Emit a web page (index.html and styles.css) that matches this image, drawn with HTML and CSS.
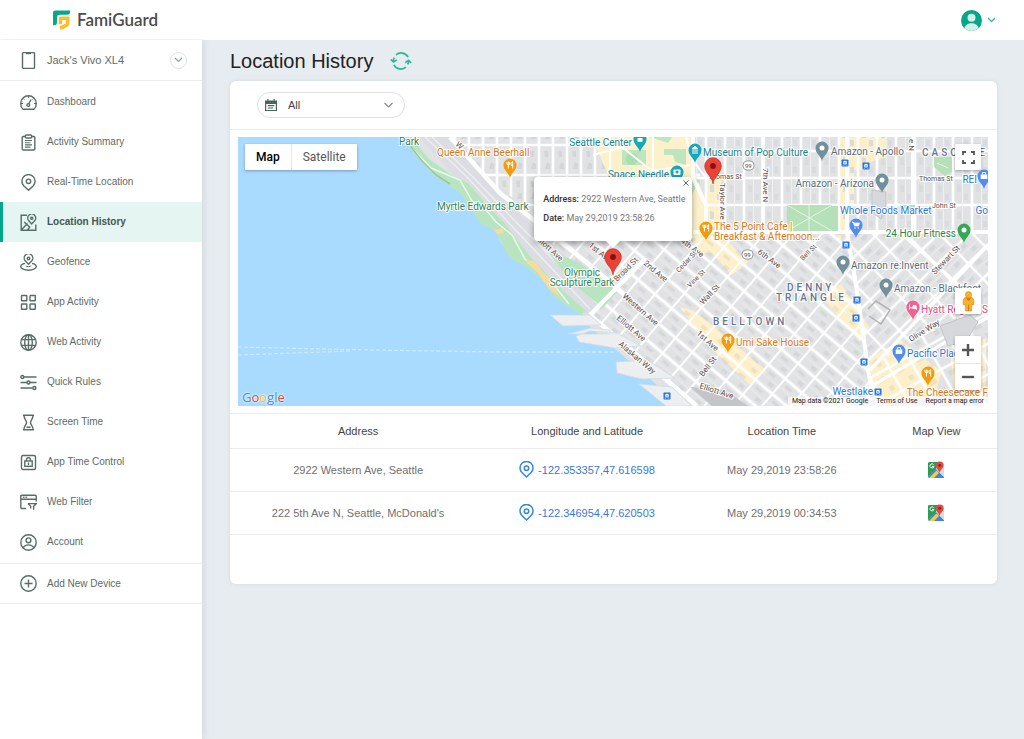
FILE: index.html
```html
<!DOCTYPE html>
<html lang="en">
<head>
<meta charset="utf-8">
<meta name="viewport" content="width=device-width, initial-scale=1">
<title>FamiGuard - Location History</title>
<link rel="stylesheet" href="styles.css">
</head>
<body>
<header class="topbar">
  <a class="brand" href="#">
    <svg class="brand-mark" viewBox="0 0 17 20" aria-hidden="true">
      <path fill="#04a788" d="M0 3Q0 .6 2.600.6H17V2Q17 4.700 14.300 4.700H6.500Q4 4.700 4 7V12.200Q4 15.200 1.200 15.200H0Z"/>
      <path fill="#fdbd2c" d="M8 6.500H16.600V13.200Q16.600 15.300 14.600 16.500L9.500 19.600Q6.800 20 6.600 17.200V16.200L12.800 13.600V10H9.200V13.200Q9.200 14.300 7.600 14.300H5.700V8.800Q5.700 6.500 8 6.500Z"/>
    </svg>
    <span>FamiGuard</span>
  </a>
  <button class="profile" type="button" aria-label="Profile menu">
    <svg class="avatar" viewBox="0 0 21 21" aria-hidden="true"><circle cx="10.500" cy="10.500" r="10.500" fill="#04a788"/><circle cx="10.500" cy="7.700" r="4" fill="#d2efe8"/><path fill="#d2efe8" d="M3.500 18.300C4 14.800 7 13.300 10.500 13.300S17 14.800 17.500 18.300A10.500 10.500 0 0 1 3.500 18.300Z"/></svg>
    <svg class="chev" viewBox="0 0 9 6" aria-hidden="true"><path d="M1 1L4.500 4.500L8 1" fill="none" stroke="#3fb49c" stroke-width="1.300"/></svg>
  </button>
</header>

<div class="shell">
<aside class="sidebar">
  <div class="device">
    <svg class="icon" viewBox="0 0 17 17"><rect x="2.500" y=".6" width="12" height="15.800" rx="1"/><path d="M6 1.200H11" stroke-width="2"/></svg>
    <span>Jack's Vivo XL4</span>
    <button class="device-toggle" type="button" aria-label="Choose device"><svg class="chev" viewBox="0 0 9 6"><path d="M1 1L4.500 4.500L8 1" fill="none" stroke="#8f9d99" stroke-width="1.100"/></svg></button>
  </div>
  <nav class="menu">
    <a href="#"><svg class="icon" viewBox="0 0 17 17"><path d="M3 15.300C.9 13.500.7 11 .7 9.500A7.800 7.800 0 0 1 16.300 9.500C16.300 11 16.100 13.500 14 15.300Z"/><path d="M8.500 2V4M3.200 4.400L4.400 5.600M13.800 4.400L12.600 5.600M1 9.500H3M14 9.500H16" stroke-width="1"/><path d="M11 5.500L8.700 10"/><circle cx="8.300" cy="11" r="1.400"/></svg>Dashboard</a>
    <a href="#"><svg class="icon" viewBox="0 0 17 17"><path d="M5 2.500H3Q2.200 2.500 2.200 3.300V15Q2.200 16 3.200 16H13.800Q14.800 16 14.800 15V3.300Q14.800 2.500 14 2.500H12"/><rect x="5.300" y="1" width="6.400" height="3" rx="1"/><path d="M5 6.500H12M5 8.700H10.500M5 10.900H12M5 13.100H10.500" stroke-width="1.100"/></svg>Activity Summary</a>
    <a href="#"><svg class="icon" viewBox="0 0 17 17"><path d="M8.500 16.300L3.700 11.700A6.600 6.600 0 1 1 13.300 11.700Z"/><circle cx="8.500" cy="7.300" r="2.200"/></svg>Real-Time Location</a>
    <a href="#" class="active" aria-current="page"><svg class="icon" viewBox="0 0 17 17"><path d="M7 1.300H1.200V16.200H15.800V10.500M1.200 16L7.500 9.500M4.200 8L9.700 13L7.600 16"/><path d="M11.700 10L8.800 6.800A4 4 0 1 1 14.600 6.800Z"/><circle cx="11.700" cy="4.300" r="1.100"/></svg>Location History</a>
    <a href="#"><svg class="icon" viewBox="0 0 17 17"><path d="M8.500 10.200L5.400 7.100A4.300 4.300 0 1 1 11.600 7.100Z"/><circle cx="8.500" cy="4.500" r="1.300"/><path d="M5 9.400C2.500 9.900.7 11 .7 12.500C.7 14.700 4.500 16.200 8.500 16.200S16.300 14.700 16.300 12.500C16.300 11 14.500 9.900 12 9.400"/><path d="M5.800 11.600C6.300 13.100 10.700 13.100 11.200 11.600" stroke-width="1"/></svg>Geofence</a>
    <a href="#"><svg class="icon" viewBox="0 0 17 17"><rect x="1.500" y="1.500" width="5.300" height="5.300" rx=".5"/><rect x="10" y="1.500" width="5.300" height="5.300" rx=".5"/><rect x="1.500" y="10" width="5.300" height="5.300" rx=".5"/><rect x="10" y="10" width="5.300" height="5.300" rx=".5"/></svg>App Activity</a>
    <a href="#"><svg class="icon" viewBox="0 0 17 17"><circle cx="8.500" cy="8.500" r="7.700"/><ellipse cx="8.500" cy="8.500" rx="3.800" ry="7.700"/><path d="M8.500 .8V16.200M2 5.600H15M2 11.400H15"/></svg>Web Activity</a>
    <a href="#"><svg class="icon" viewBox="0 0 17 17"><path d="M4 3H16.500M.5 8.500H7M10 8.500H16.500M.5 14H12.700"/><circle cx="2.300" cy="3" r="1.500"/><circle cx="8.500" cy="8.500" r="1.500"/><circle cx="14.400" cy="14" r="1.500"/></svg>Quick Rules</a>
    <a href="#"><svg class="icon" viewBox="0 0 17 17"><path d="M3 1.300H14M3 15.700H14" stroke-width="1.500"/><path d="M4 1.500C4 5 6.500 6.200 6.500 8.500S4 12 4 15.500M13 1.500C13 5 10.500 6.200 10.500 8.500S13 12 13 15.500M6.500 13.300H10.500"/></svg>Screen Time</a>
    <a href="#"><svg class="icon" viewBox="0 0 17 17"><rect x="1.500" y="1.500" width="14" height="14" rx="1.500"/><rect x="4.800" y="7" width="7.400" height="5.300"/><path d="M6.500 7V5.800A2 2 0 0 1 10.500 5.800V7M8.500 8.500V11"/></svg>App Time Control</a>
    <a href="#"><svg class="icon" viewBox="0 0 17 17"><path d="M6 14.500H2Q.8 14.500.8 13.300V2.200Q.8 1.200 1.800 1.200H15.200Q16.200 1.200 16.200 2.200V7.500M.8 5.300H16.200"/><path d="M2.800 3.200H7.500" stroke-dasharray="1 .7"/><path d="M8 9.600H16.300L13.600 12.300V15.800M8 9.600L10.700 12.300V14.600"/></svg>Web Filter</a>
    <a href="#"><svg class="icon" viewBox="0 0 17 17"><circle cx="8.500" cy="8.500" r="7.700"/><circle cx="8.500" cy="6.300" r="2.400"/><path d="M3.200 14C4 11.800 6 10.900 8.500 10.900S13 11.800 13.800 14"/></svg>Account</a>
  </nav>
  <a class="add-device" href="#"><svg class="icon" viewBox="0 0 17 17"><circle cx="8.500" cy="8.500" r="7.700"/><path d="M8.500 4.500V12.500M4.500 8.500H12.500"/></svg>Add New Device</a>
</aside>

<main class="content">
  <div class="heading">
    <h1>Location History</h1>
    <button type="button" class="refresh" aria-label="Refresh"><svg viewBox="0 0 22 18" fill="none" stroke="#2bb898" stroke-width="1.700"><path d="M6 2.800C9.500 -.2 15.500 .4 18.200 5.200M3.600 9.800C3.300 8.200 3.500 7 4.200 5.500M16 15.200C12.500 18.200 6.500 17.600 3.800 12.800M18.400 8.500C18.700 9.800 18.500 11 17.800 12.500"/><path d="M.8 7.400L3.600 10L6.800 7.900M15.200 10.600L18.400 8.300L21.300 10.900"/></svg></button>
  </div>

  <section class="card">
    <div class="toolbar">
      <label class="range">
        <svg class="range-cal" viewBox="0 0 12 12"><path fill="#49665d" d="M0 1.500H2.300V0H3.500V1.500H8.500V0H9.700V1.500H12V12H0ZM1.200 5V10.900H10.800V5Z" fill-rule="evenodd"/><path d="M2.800 6.600H9.300M2.800 9H8" stroke="#49665d" stroke-width="1.100"/></svg>
        <select aria-label="Date range"><option>All</option></select>
        <svg class="chev range-chev" viewBox="0 0 9 6"><path d="M.5 1L4.500 5L8.500 1" fill="none" stroke="#888" stroke-width="1.200"/></svg>
      </label>
    </div>

    <div class="map-wrap"><div class="map">
      <svg class="map-canvas" viewBox="238 137 750 269" preserveAspectRatio="xMidYMid slice" role="img" aria-label="Map of Seattle">
        <defs>
          <pattern id="north" width="14" height="30" patternUnits="userSpaceOnUse" x="497" y="175"><path d="M5 6h4v6h-3zM8 17l3 2v5h-5z" fill="#d3d5d8"/><path d="M0 0H14M0 30H14M0 0V30M14 0V30" stroke="#fff" stroke-width="2.600"/></pattern>
          <pattern id="east" width="19" height="27" patternUnits="userSpaceOnUse" x="706" y="178"><path d="M4 6l4 1v7H4zM11 16h4v6h-4z" fill="#dadbde"/><path d="M0 0H19M0 27H19M0 0V27M19 0V27" stroke="#fff" stroke-width="2.600"/><path d="M9.500 0V27" stroke="#f1f2f3" stroke-width=".8"/></pattern>
          <pattern id="belltown" width="22" height="20" patternUnits="userSpaceOnUse" patternTransform="translate(590 315) rotate(40.400) translate(-8 2)"><path d="M5 4h8v3H5zM12 12h6v4h-6z" fill="#9a9ca5" fill-opacity=".15"/><path d="M0 0H22M0 20H22" stroke="#fff" stroke-width="3.200"/><path d="M0 0V20M22 0V20" stroke="#fff" stroke-width="2"/><path d="M0 10H22" stroke="#fff" stroke-opacity=".5" stroke-width=".7"/></pattern>
          <pattern id="triangle" width="24" height="21" patternUnits="userSpaceOnUse" patternTransform="translate(870 300) rotate(-44)"><path d="M5 4h7v4H5zM12 12h6v4h-6z" fill="#9a9ca5" fill-opacity=".15"/><path d="M0 0H24M0 21H24M0 0V21M24 0V21" stroke="#fff" stroke-width="2.400"/><path d="M0 10.500H24" stroke="#fff" stroke-opacity=".5" stroke-width=".7"/></pattern>
          <pattern id="olive" width="22" height="27" patternUnits="userSpaceOnUse" patternTransform="translate(870 378) rotate(-29)"><path d="M5 5h8v5H5zM12 17h5v5h-5z" fill="#9a9ca5" fill-opacity=".15"/><path d="M0 0H22M0 27H22M0 0V27M22 0V27" stroke="#fff" stroke-width="2.600"/></pattern>
          <g id="drop"><path d="M0 13C-1 8-6.500 5.500-6.500 0A6.500 6.500 0 0 1 6.500 0C6.500 5.500 1 8 0 13Z"/></g>
          <g id="fork"><use href="#drop" fill="#f49b0b"/><path d="M-3-3.300V-.7H-.2V-3.300M-1.600-3.300V3.500M2.700 3.500V-3.500C1-2.500 1-.5 1.200.3H2.700" fill="none" stroke="#fff" stroke-width="1"/></g>
          <g id="spot"><use href="#drop" fill="#71909c"/><circle r="2.500" fill="#fff"/></g>
          <g id="bag"><use href="#drop" fill="#4f8df5"/><path d="M-3.300-1.500H3.300V3H-3.300Z" fill="#fff"/><path d="M-1.600-1.500V-3.300H1.600V-1.500" fill="none" stroke="#fff"/></g>
          <g id="station"><rect x="-3.500" y="-3.500" width="7" height="7" rx=".7" fill="#2476e8"/><path d="M-1.700 1.300V-1.700Q0-3 1.700-1.700V1.300Z" fill="#fff"/><path d="M-2 2.700L-.8 1.400M2 2.700L.8 1.400" stroke="#fff" stroke-width=".7"/><circle cy="0" r=".8" fill="#2476e8"/></g>
          <g id="place"><path fill="#ea4335" stroke="#c5221f" stroke-width=".6" d="M0 18C-.8 10-8.300 7.500-8.300 0A8.300 8.300 0 0 1 8.300 0C8.300 7.500.8 10 0 18Z"/><circle r="2.900" fill="#811411"/></g>
        </defs>
        <rect x="238" y="137" width="750" height="269" fill="#a9daff"/>
        <path d="M405 137L410 147L423 160L435 174L450 182L463 193L472 208L483 224L496 230L500 241L512 258L530 267L545 280L557 297L583 314L590 327L697 420H1000V130H402Z" fill="#e1e2e4"/>
        <path d="M838 137H886V157L870 162V170H854V205H845V232L838 243ZM707 248L723 236L748 262L732 275ZM680 307L694 311L732 341L766 371L750 385L705 342Z" fill="#fdefc8"/>
        <path d="M707 178H721V228H707ZM693 238H732L720 253H694ZM822 297L841 284L869 327L860 342ZM870 358L900 340L942 372L933 400H872ZM950 355L986 338V399H956Z" fill="#fdefc8"/>

        <path d="M450 137H700V232H575L500 190Z" fill="url(#north)"/>
        <path d="M693 137H988V232H693Z" fill="url(#east)"/>
        <path d="M560 232H848L856 285L872 390V406H697L590 315L583 309L540 250Z" fill="url(#belltown)"/>
        <path d="M848 232H988V300L867 368L856 285Z" fill="url(#triangle)"/>
        <path d="M988 300V406H872L867 368Z" fill="url(#olive)"/>

        <path d="M592 137H693L694 170L707 205L707 238H691V180H610Z" fill="#fdf1cc"/>
        <path d="M622 150H646V165H622ZM664 149H686V165L675 162L673 155H664ZM690 178L700 180L692 194ZM650 137H672L668 143Z" fill="#bde6be"/>
        <circle cx="632" cy="159" r="6" fill="#a7dfae"/>
        <path d="M610 137V177M593 155L622 147L652 171L690 165M653 137V176M686 137L692 159L706 178M623 137V150" stroke="#fff" stroke-width="2" fill="none"/>

        <path d="M419 137H448L500 196L590 278L610 300L588 316L555 291L520 253L492 218L455 176Z" fill="#dbdde2"/>
        <path d="M425 137L468 178L508 222L590 309M432 137L474 178L512 218L600 306" fill="none" stroke="#eceef1" stroke-width="1.500"/>
        <path d="M402 137H411L429 159L450 174L469 184L486 204L507 226L528 254L558 286L586 311L581 315L555 298L543 281L528 268L510 258L500 240L494 230L481 224L470 208L460 193L447 184L432 174L417 157Z" fill="#b8e5c0"/>
        <path d="M406 142L431 168L460 180L472 201L487 211L496 222L512 235L525 259L550 280L569 304" fill="none" stroke="#eaf9ed" stroke-width="1.500"/>
        <path d="M405 139L422 161L436 175L450 184" fill="none" stroke="#99c59c" stroke-width="1.500"/>
        <path d="M494 230L503 228L504 233L497 234ZM524 260L534 261L552 282L560 297L549 289L538 273Z" fill="#f6dca0"/>
        <path d="M571 259L604 277L617 292L603 308L570 281L548 252Z" fill="#b8e5c0"/>
        <path d="M693 137V178L706 205V240M763 137V232M847 137V232L856 285L870 382L880 406M693 232H988M913 137V232" fill="none" stroke="#fff" stroke-width="4"/>
        <path d="M450 137L500 193L586 262L640 308M590 315L697 406M590 315L644 260" fill="none" stroke="#fff" stroke-width="4.500"/>
        <path d="M838 406L988 317M870 370L988 245M900 232L988 312" fill="none" stroke="#fff" stroke-width="3.500"/>
        <path d="M787 205H832V231H787ZM829 206H838V231H829ZM934 157H952V172L945 176L934 167ZM900 205H915V212H900Z" fill="#b6e0b8"/>
        <path d="M787 205L832 231M787 231L832 205M809 205V231M937 163L948 168" stroke="#e4f5e4" stroke-width="1" fill="none"/>
        <path d="M872 190L886 192V205L881 219L872 212ZM940 326L970 315L978 322L966 341L948 346Z" fill="#d6d8db" stroke="#c3c5c9"/>
        <path d="M868 309L876 301L890 310L881 324L869 316" fill="none" stroke="#b3b3b5" stroke-width="1.500"/>
        <path d="M690 387L725 390L748 406H712Z" fill="#c3c5c8"/>
        <path d="M550 315H590L601 325L563 326ZM576 336L590 331L617 333L641 346L615 348L579 342ZM616 362L647 360L675 378L642 379L617 373ZM639 384L672 387L692 406H666ZM568 334H610V330L591 328Z" fill="#eceeef" stroke="#d0dce5" stroke-width=".8"/>
        <path d="M238 347L370 350L500 352H613L620 347M238 355L350 351" fill="none" stroke="#cbeaff" stroke-width="1.300" stroke-dasharray="4 2"/>

        <g class="road">
          <text transform="translate(617 282) rotate(-45)">Broad St</text><text transform="translate(643 264) rotate(40)">2nd Ave</text>
          <text transform="translate(588 246) rotate(40)">1st Ave</text><text transform="translate(680 242) rotate(36)">4th Ave</text>
          <text transform="translate(534 238) rotate(42)">Elliott Ave</text><text transform="translate(622 297) rotate(41)">Western Ave</text>
          <text transform="translate(616 319) rotate(40)">Elliott Ave</text><text transform="translate(618 345) rotate(40)">Alaskan Way</text>
          <text transform="translate(696 334) rotate(42)">1st Ave</text><text transform="translate(703 305) rotate(-46)">Wall St</text>
          <text transform="translate(703 377) rotate(-52)">Bell St</text><text transform="translate(699 388) rotate(18)">Elliott Ave</text>
          <text transform="translate(720 183) rotate(90)">Taylor Ave N</text><text transform="translate(763 168) rotate(90)">7th Ave N</text>
          <text transform="translate(757 253) rotate(36)">6th Ave</text><text transform="translate(935 275) rotate(-46)">Stewart St</text>
          <text transform="translate(911 342) rotate(-32)">Olive Way</text><text transform="translate(909 139) rotate(90)">e N</text><text transform="translate(455 145) rotate(42)">W</text>
        </g>
        <g class="road small">
          <text x="708" y="179">Thomas St</text><text x="919" y="181">Thomas St</text><text x="932" y="208">John St</text>
          <text transform="translate(679 273) rotate(-47)">Cedar St</text><text transform="translate(690 288) rotate(-45)">Vine St</text><text transform="translate(803 261) rotate(-45)">Bell St</text>
        </g>
        <g class="shield"><rect x="743" y="161" width="11" height="9" rx="4"/><text x="745" y="168">99</text><rect x="742" y="250" width="11" height="9" rx="4"/><text x="744" y="257">99</text></g>
        <g class="poi park"><text x="399" y="145">Park</text><text x="437" y="210">Myrtle Edwards Park</text><text x="582" y="276" text-anchor="middle">Olympic</text><text x="582" y="286" text-anchor="middle">Sculpture Park</text><text x="956" y="237" text-anchor="end">24 Hour Fitness</text></g>
        <g class="poi food"><text x="437" y="156">Queen Anne Beerhall</text><text x="714" y="230">The 5 Point Cafe |</text><text x="714" y="240">Breakfast &amp; Afternoon...</text><text x="736" y="346">Umi Sake House</text><text x="988" y="396" text-anchor="end">The Cheesecake F</text></g>
        <g class="poi sight"><text x="632" y="146" text-anchor="end">Seattle Center</text><text x="669" y="178" text-anchor="end">Space Needle</text><text x="703" y="156">Museum of Pop Culture</text></g>
        <g class="poi office"><text x="831" y="155">Amazon - Apollo</text><text x="874" y="187" text-anchor="end">Amazon - Arizona</text><text x="851" y="269">Amazon re:Invent</text><text x="894" y="292">Amazon - Blackfoot</text></g>
        <g class="poi shop"><text x="840" y="214">Whole Foods Market</text><text x="977" y="183" text-anchor="end">REI</text><text x="988" y="214" text-anchor="end">Go</text><text x="907" y="357">Pacific Place</text><text x="873" y="395" text-anchor="end">Westlake</text></g>
        <g class="poi hotel"><text x="921" y="313">Hyatt Rege</text><text x="982" y="313">S</text></g>
        <g class="district"><text x="922" y="156">CASCADE</text><text x="713" y="325">BELLTOWN</text><text x="787" y="291">DENNY</text><text x="776" y="301">TRIANGLE</text></g>
        <use href="#fork" x="510" y="165"/><use href="#fork" x="706" y="228"/><use href="#fork" x="728" y="340"/><use href="#fork" x="928" y="373"/>
        <use href="#spot" x="822" y="148"/><use href="#spot" x="882" y="180"/><use href="#spot" x="843" y="262"/><use href="#spot" x="886" y="285"/>
        <use href="#bag" x="984" y="176"/><use href="#bag" x="899" y="351"/>
        <g transform="translate(856 225)"><use href="#drop" fill="#4f8df5"/><path d="M-4-3H-2.700L-1.500 1H2.500L3.500-2H-2.300Z" fill="#fff" stroke="#fff" stroke-width=".7"/><circle cx="-1" cy="3" r=".8" fill="#fff"/><circle cx="2.200" cy="3" r=".8" fill="#fff"/></g>
        <g transform="translate(695 150)"><use href="#drop" fill="#12a9bd"/><path d="M-3 3H3M-2 2V-1M0 2V-1M2 2V-1M-3-1.500L0-3.500L3-1.500Z" stroke="#fff" fill="#fff"/></g>
        <g transform="translate(640 139)"><use href="#drop" fill="#12a9bd"/><path d="M-2.500-1H2.500V3H-2.500Z" fill="#fff"/></g>
        <g transform="translate(677 172)"><use href="#drop" fill="#12a9bd"/><rect x="-3.500" y="-2.500" width="7" height="5.500" rx=".7" fill="#fff"/><circle r="1.500" fill="#12a9bd"/></g>
        <g transform="translate(964 230)"><use href="#drop" fill="#34a853"/><circle r="2.500" fill="#fff"/></g>
        <g transform="translate(913 307)"><use href="#drop" fill="#f06292"/><path d="M-3.500-2.500V2.500M-3 .8H3.500V2.500M0-1.500H3V.5H0Z" stroke="#fff" fill="#fff"/></g>
        <use href="#station" x="845" y="163"/><use href="#station" x="866" y="166"/><use href="#station" x="846" y="245"/><use href="#station" x="857" y="300"/><use href="#station" x="856" y="318"/><use href="#station" x="864" y="362"/><use href="#station" x="878" y="392"/><use href="#station" x="667" y="396"/>
        <use href="#place" x="713" y="166"/><use href="#place" x="613" y="257"/>
      </svg>

      <div class="map-type"><button type="button" class="chosen">Map</button><button type="button">Satellite</button></div>
      <div class="popup">
        <button type="button" class="popup-close" aria-label="Close"><svg viewBox="0 0 6 6"><path d="M.5.5L5.500 5.500M5.500.5L.5 5.500" stroke="#555" stroke-width=".9"/></svg></button>
        <p><b>Address:</b> 2922 Western Ave, Seattle</p>
        <p><b>Date:</b> May 29,2019 23:58:26</p>
      </div>
      <button type="button" class="map-btn full" aria-label="Full screen"><svg viewBox="0 0 13 13"><path d="M1 4V1H4M9 1H12V4M12 9V12H9M4 12H1V9" fill="none" stroke="#555" stroke-width="1.800"/></svg></button>
      <button type="button" class="map-btn person" aria-label="Street View"><svg viewBox="0 0 12 20"><path d="M3.500 6H8.500Q11 6.500 11 9V13H9V19H3V13H1V9Q1 6.500 3.500 6Z" fill="#f5b22d" stroke="#d98b1c" stroke-width=".6"/><circle cx="6" cy="3.500" r="3" fill="#f5b22d" stroke="#d98b1c" stroke-width=".5"/><path d="M4 6.500L6 9L8 6.500M6 13V19" stroke="#d5791b" fill="#e9861c"/></svg></button>
      <div class="zoom"><button type="button" aria-label="Zoom in"><svg viewBox="0 0 12 12"><path d="M6 0V12M0 6H12" stroke="#555" stroke-width="2.400"/></svg></button><button type="button" aria-label="Zoom out"><svg viewBox="0 0 12 12"><path d="M0 6H12" stroke="#555" stroke-width="2.400"/></svg></button></div>
      <div class="google" aria-label="Google"><span class="b">G</span><span class="r">o</span><span class="y">o</span><span class="b">g</span><span class="g">l</span><span class="r">e</span></div>
      <div class="legal"><span>Map data ©2021 Google</span><a href="#">Terms of Use</a><a href="#">Report a map error</a></div>
    </div></div>

    <table class="places">
      <thead><tr><th class="c-address">Address</th><th class="c-coords">Longitude and Latitude</th><th class="c-time">Location Time</th><th class="c-view">Map View</th></tr></thead>
      <tbody>
        <tr><td>2922 Western Ave, Seattle</td><td><a class="coords" href="#"><svg viewBox="0 0 15 17"><path d="M7.500 16L2.900 11.500A6.500 6.500 0 1 1 12.100 11.500Z"/><circle cx="7.500" cy="7.300" r="2.200"/></svg>-122.353357,47.616598</a></td><td>May 29,2019 23:58:26</td><td><a class="view" href="#" aria-label="View on map"><svg viewBox="0 0 18 18"><rect x="1" y="1" width="16" height="16" rx="1" fill="#e5e7e8"/><path d="M2 1H12L8.500 9L1 16V2Z" fill="#2c9d55"/><path d="M1 16L9 8L17 16V17H2Z" fill="#3f82e8"/><path d="M2 17L9.500 9.500L12 12L7 17Z" fill="#f8cb3b"/><path d="M10 9L17 5V16Z" fill="#d9dcde"/><path d="M12.500 12C12 9 8.800 7.500 8.800 4.300A3.900 3.900 0 0 1 16.600 4.300C16.600 7.500 13 9 12.500 12Z" fill="#df4b3f"/><circle cx="12.700" cy="4.300" r="1.400" fill="#7c2922"/><path d="M6.700 3.900A2 2 0 1 0 6.900 5.500H5" fill="none" stroke="#fff"/></svg></a></td></tr>
        <tr><td>222 5th Ave N, Seattle, McDonald's</td><td><a class="coords" href="#"><svg viewBox="0 0 15 17"><path d="M7.500 16L2.900 11.500A6.500 6.500 0 1 1 12.100 11.500Z"/><circle cx="7.500" cy="7.300" r="2.200"/></svg>-122.346954,47.620503</a></td><td>May 29,2019 00:34:53</td><td><a class="view" href="#" aria-label="View on map"><svg viewBox="0 0 18 18"><rect x="1" y="1" width="16" height="16" rx="1" fill="#e5e7e8"/><path d="M2 1H12L8.500 9L1 16V2Z" fill="#2c9d55"/><path d="M1 16L9 8L17 16V17H2Z" fill="#3f82e8"/><path d="M2 17L9.500 9.500L12 12L7 17Z" fill="#f8cb3b"/><path d="M10 9L17 5V16Z" fill="#d9dcde"/><path d="M12.500 12C12 9 8.800 7.500 8.800 4.300A3.900 3.900 0 0 1 16.600 4.300C16.600 7.500 13 9 12.500 12Z" fill="#df4b3f"/><circle cx="12.700" cy="4.300" r="1.400" fill="#7c2922"/><path d="M6.700 3.900A2 2 0 1 0 6.900 5.500H5" fill="none" stroke="#fff"/></svg></a></td></tr>
      </tbody>
    </table>
  </section>
</main>
</div>
</body>
</html>
```
FILE: styles.css
```css
* { box-sizing: border-box; }
body { margin: 0; min-height: 100vh; display: flex; flex-direction: column; background: #e7ecf0; color: #5d6b67; font: 10px/16px "Liberation Sans", Arial, sans-serif; }
button { border: 0; padding: 0; background: none; font: inherit; color: inherit; display: flex; align-items: center; justify-content: center; cursor: pointer; }
a { color: inherit; text-decoration: none; }
svg { display: block; }

.topbar { height: 40px; flex: none; display: flex; align-items: center; justify-content: space-between; padding: 0 28px 0 53px; background: #fff; }
.brand { display: flex; align-items: center; gap: 7px; color: #4c4c4c; font: 600 17px/20px Lato, sans-serif; }
.brand-mark { width: 17px; height: 20px; }
.profile { gap: 5px; }
.avatar { width: 21px; height: 21px; }
.chev { width: 9px; height: 6px; }

.shell { flex: 1; display: flex; }
.sidebar { width: 202px; flex: none; background: #fff; box-shadow: 0 0 8px rgba(60, 80, 100, .18); clip-path: inset(-1px -12px 0 0); }
.icon { width: 17px; height: 17px; flex: none; fill: none; stroke: #586d67; stroke-width: 1.4px; }
.device { height: 41px; display: flex; align-items: center; gap: 10px; padding: 0 15px 0 20px; border-bottom: 1px solid #ececec; font-size: 11px; }
.device-toggle { width: 17px; height: 17px; margin-left: auto; border: 1px solid #e0e3e3; border-radius: 50%; }
.device-toggle .chev { flex: none; }
.menu { padding: 1px 0; border-bottom: 1px solid #ececec; }
.menu a, .add-device { height: 40px; display: flex; align-items: center; gap: 10px; padding-left: 20px; }
.menu .active { background: #e4f5f2; box-shadow: inset 3px 0 #04a788; font-weight: 700; color: #465651; }
.add-device { border-bottom: 1px solid #ececec; }

.content { flex: 1; min-width: 0; padding: 6px 27px 27px 28px; }
.heading { display: flex; align-items: center; gap: 17px; height: 30px; }
h1 { margin: 0; font-size: 20px; line-height: 28px; font-weight: 400; color: #222; }
.refresh svg { width: 22px; height: 18px; }
.card { margin-top: 5px; padding-bottom: 49px; background: #fff; border-radius: 6px; box-shadow: 0 0 4px rgba(60, 80, 100, .12); }
.toolbar { padding: 11px 27px; border-bottom: 1px solid #ececec; }
.range { display: inline-grid; width: 148px; height: 26px; align-items: center; vertical-align: top; }
.range > * { grid-area: 1 / 1; }
.range select { width: 100%; height: 100%; padding: 0 28px 0 30px; appearance: none; background: #fff; border: 1px solid #e0e0e0; border-radius: 13px; font: inherit; font-size: 11px; color: #444; }
.range-cal { z-index: 1; width: 12px; height: 12px; margin-left: 8px; pointer-events: none; }
.range-chev { z-index: 1; justify-self: end; margin-right: 12px; pointer-events: none; }

.map-wrap { padding: 7px 9px 7px 8px; border-bottom: 1px solid #ececec; }
.map { position: relative; aspect-ratio: 750 / 269; overflow: hidden; font-family: Roboto, sans-serif; }
.map-canvas { width: 100%; height: 100%; }
.map-canvas text { stroke: #fff; stroke-width: 2px; stroke-linejoin: round; paint-order: stroke; }
.road { font-size: 8px; fill: #5d4a45; }
.road.small { font-size: 7px; }
.poi { font-size: 10px; font-weight: 400; }
.park { fill: #2b8352; }
.food { fill: #d77813; }
.sight { fill: #12838f; }
.office { fill: #5c6c76; }
.shop { fill: #2c78d8; }
.hotel { fill: #e64b83; }
.district { font-size: 10px; font-weight: 500; letter-spacing: 3px; fill: #65748f; }
.shield rect { fill: #fff; stroke: #777; stroke-width: .7px; }
.shield text { font-size: 6px; fill: #444; stroke: none; }
.map-type, .map-btn, .zoom { position: absolute; background: #fff; box-shadow: 0 1px 3px rgba(0, 0, 0, .3); border-radius: 1px; }
.map-type { left: 7px; top: 7px; display: flex; height: 26px; font-size: 12px; color: #565656; }
.map-type button { padding: 0 11px; }
.map-type .chosen { color: #000; font-weight: 500; border-right: 1px solid #e6e6e6; }
.map-btn { right: 7px; width: 26px; height: 26px; }
.full { top: 7px; }
.full svg { width: 13px; height: 13px; }
.person { bottom: 92px; }
.person svg { width: 13px; height: 21px; }
.zoom { right: 7px; bottom: 16px; width: 26px; }
.zoom button { width: 26px; height: 27px; }
.zoom button + button { box-shadow: inset 0 1px #e6e6e6; }
.zoom svg { width: 12px; height: 12px; }
.popup { position: absolute; left: 39.5%; bottom: 61.5%; padding: 13px 7px 13px 9px; background: #fff; border-radius: 4px; box-shadow: 0 2px 6px rgba(0, 0, 0, .35); font-size: 9px; line-height: 19px; color: #777; white-space: nowrap; }
.popup::after { content: ""; position: absolute; left: 72px; top: 100%; border: 7px solid transparent; border-top-color: #fff; border-bottom: 0; }
.popup p { margin: 0; }
.popup b { color: #333; font-weight: 500; }
.popup-close { position: absolute; right: 3px; top: 3px; }
.popup-close svg { width: 6px; height: 6px; }
.google { position: absolute; left: 4px; bottom: 0; font: 500 13px/18px "Open Sans", sans-serif; text-shadow: 0 0 2px #fff, 0 0 2px #fff; }
.b { color: #4285f4; }
.r { color: #ea4335; }
.y { color: #fbbc05; }
.g { color: #34a853; }
.legal { position: absolute; right: 0; bottom: 0; display: flex; gap: 8px; padding: 0 4px; background: rgba(255, 255, 255, .65); font-size: 7px; line-height: 9px; color: #222; }

.places { width: 100%; table-layout: fixed; border-collapse: collapse; font-size: 11px; text-align: center; color: #707070; }
.places th, .places td { padding: 0; border-bottom: 1px solid #ececec; }
.places th { height: 34px; font-weight: 400; color: #444; }
.places td { height: 43px; }
.c-address { width: 33.4%; }
.c-coords { width: 26.3%; }
.c-time { width: 24.5%; }
.c-view { width: 15.8%; }
.coords { display: inline-flex; align-items: center; gap: 4px; color: #3a78d8; vertical-align: middle; }
.coords svg { width: 15px; height: 17px; fill: none; stroke: #3585e8; stroke-width: 1.5px; }
.view { display: inline-block; vertical-align: middle; }
.view svg { width: 18px; height: 18px; }
```
